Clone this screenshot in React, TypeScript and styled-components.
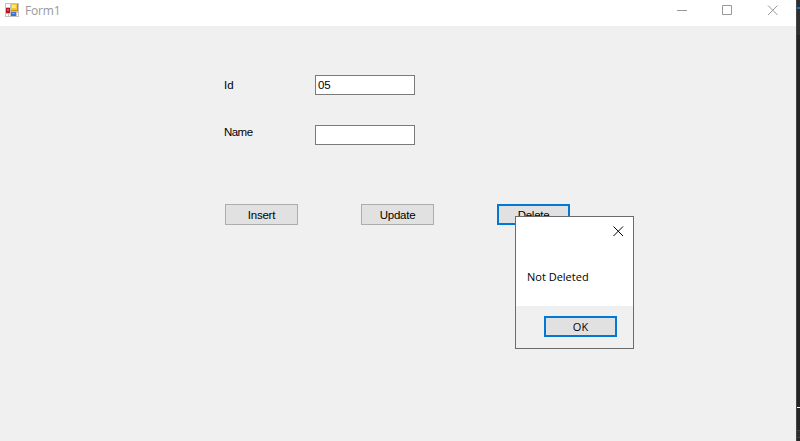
import React from 'react';
import styled, { createGlobalStyle } from 'styled-components';

const GlobalStyle = createGlobalStyle`
  * { box-sizing: border-box; }
  body { margin: 0; overflow: hidden; background: #242627; }
`;

const Screen = styled.div`
  position: relative;
  display: flex;
  width: 800px;
  height: 441px;
  overflow: hidden;
  font-family: 'Liberation Sans', Arial, sans-serif;
  font-size: 11.5px;
  line-height: 13px;
  letter-spacing: -0.3px;
  color: #000;
`;

const Window = styled.main`
  display: flex;
  flex-direction: column;
  width: 796px;
  height: 441px;
  background: #f0f0f0;
`;

const TitleBar = styled.header`
  display: flex;
  height: 26px;
  padding-left: 5px;
  background: #fff;
`;

const AppIcon = styled.svg`
  margin-top: 3px;
  flex: none;
`;

const Title = styled.span`
  flex: 1;
  margin: 2px 0 0 6px;
  font: 12px/17px 'Open Sans', sans-serif;
  letter-spacing: -0.2px;
  color: #999;
`;

const Controls = styled.svg`
  flex: none;
  margin: 5px 18px 0 0;
`;

const Form = styled.section`
  display: flex;
  flex-direction: column;
  padding: 49px 0 0 224px;
`;

const Field = styled.div`
  display: grid;
  grid-template-columns: 91px 100px;
  height: 50px;
  align-items: start;
`;

const Label = styled.label<{ $top: number; $spacing?: number }>`
  padding-top: ${(p) => p.$top}px;
  letter-spacing: ${(p) => p.$spacing ?? 0}px;
`;

const TextBox = styled.input`
  width: 100px;
  height: 20px;
  margin: 0;
  padding: 0 2px 1px;
  border: 1px solid #7a7a7a;
  border-radius: 0;
  outline: none;
  background: #fff;
  color: #000;
  font: inherit;
  letter-spacing: -0.1px;
`;

const Actions = styled.div`
  display: flex;
  gap: 63px;
  margin: 29px 0 0 1px;
`;

const Button = styled.button<{ $focused?: boolean; $dialog?: boolean }>`
  display: flex;
  align-items: center;
  justify-content: center;
  width: 73px;
  height: 21px;
  padding: ${(p) => (p.$dialog ? '0 0 1px' : '1px 0 0')};
  border: ${(p) => (p.$focused ? '2px solid #0078d7' : '1px solid #adadad')};
  border-radius: 0;
  background: #e1e1e1;
  color: #000;
  font: ${(p) => (p.$dialog ? "11px/15px 'Open Sans', sans-serif" : 'inherit')};
  letter-spacing: ${(p) => (p.$dialog ? '0' : '-0.25px')};
`;

const Dialog = styled.div`
  position: absolute;
  left: 515px;
  top: 216px;
  display: flex;
  flex-direction: column;
  width: 119px;
  height: 133px;
  border: 1px solid #6b6b6b;
  background: #fff;
`;

const DialogHeader = styled.div`
  display: flex;
  justify-content: flex-end;
  height: 52px;
  padding: 9px 9px 0 0;
`;

const Message = styled.p`
  flex: 1;
  margin: 0;
  padding-left: 11px;
  white-space: nowrap;
  font: 11px/16px 'Open Sans', sans-serif;
  letter-spacing: 0;
`;

const DialogFooter = styled.div`
  display: flex;
  justify-content: flex-end;
  height: 42px;
  padding: 10px 16px 0 0;
  background: #f0f0f0;
`;

const Backdrop = styled.aside`
  display: flex;
  flex-direction: column;
  width: 4px;
  height: 441px;
  border-left: 1px solid #454545;
  background: #242627;
`;

const Strip = styled.div<{ $height: number; $color: string }>`
  flex: none;
  height: ${(p) => p.$height}px;
  background: ${(p) => p.$color};
`;

const CROSS = 'M0.5 0.5 L10 10 M10 0.5 L0.5 10';

export default function App() {
  return (
    <>
      <GlobalStyle />
      <Screen>
        <Window>
          <TitleBar>
            <AppIcon width="14" height="14" viewBox="0 0 14 14" shapeRendering="crispEdges">
              <path fill="#c3c3c3" d="M0 0h14v14H0z" />
              <path fill="#fff" d="M1 1h4v3H1zM1 11h2v2H1zM4 11h1v2H4zM12 10h1v3h-1z" />
              <path fill="#b5161b" d="M1 5h4v5H1z" />
              <path fill="#e0524c" d="M2 6h2v2H2z" />
              <path fill="#c79108" d="M6 1h7v7H6z" />
              <path fill="#f5c72f" d="M6 1h6v6H6z" />
              <path fill="#ffe88a" d="M7 2h4v3H7z" />
              <path fill="#3c72d0" d="M6 9h5v4H6z" />
              <path fill="#77a7f2" d="M7 10h3v1H7z" />
            </AppIcon>
            <Title>Form1</Title>
            <Controls width="101" height="11" viewBox="0 0 101 11" fill="none" stroke="#999">
              <path d="M0 5.5h10M45.5 0.5h9v9h-9z" />
              <path transform="translate(90.5 0)" d={CROSS} />
            </Controls>
          </TitleBar>
          <Form>
            <Field>
              <Label $top={4} htmlFor="id">Id</Label>
              <TextBox id="id" defaultValue="05" />
            </Field>
            <Field>
              <Label $top={1} $spacing={-0.55} htmlFor="name">Name</Label>
              <TextBox id="name" />
            </Field>
            <Actions>
              <Button>Insert</Button>
              <Button>Update</Button>
              <Button $focused>Delete</Button>
            </Actions>
          </Form>
        </Window>
        <Backdrop>
          <Strip $height={7} $color="#2d2f30" />
          <Strip $height={2} $color="#0078d7" />
          <Strip $height={26} $color="#2d2f30" />
          <Strip $height={372} $color="#222425" />
          <Strip $height={1} $color="#fff" />
          <Strip $height={22} $color="#242627" />
          <Strip $height={1} $color="#414243" />
          <Strip $height={6} $color="#2d2e2f" />
          <Strip $height={1} $color="#414243" />
        </Backdrop>
        <Dialog role="dialog">
          <DialogHeader>
            <svg width="11" height="11" viewBox="0 0 11 11" fill="none" stroke="#000">
              <path d={CROSS} />
            </svg>
          </DialogHeader>
          <Message>Not Deleted</Message>
          <DialogFooter>
            <Button $focused $dialog>OK</Button>
          </DialogFooter>
        </Dialog>
      </Screen>
    </>
  );
}
